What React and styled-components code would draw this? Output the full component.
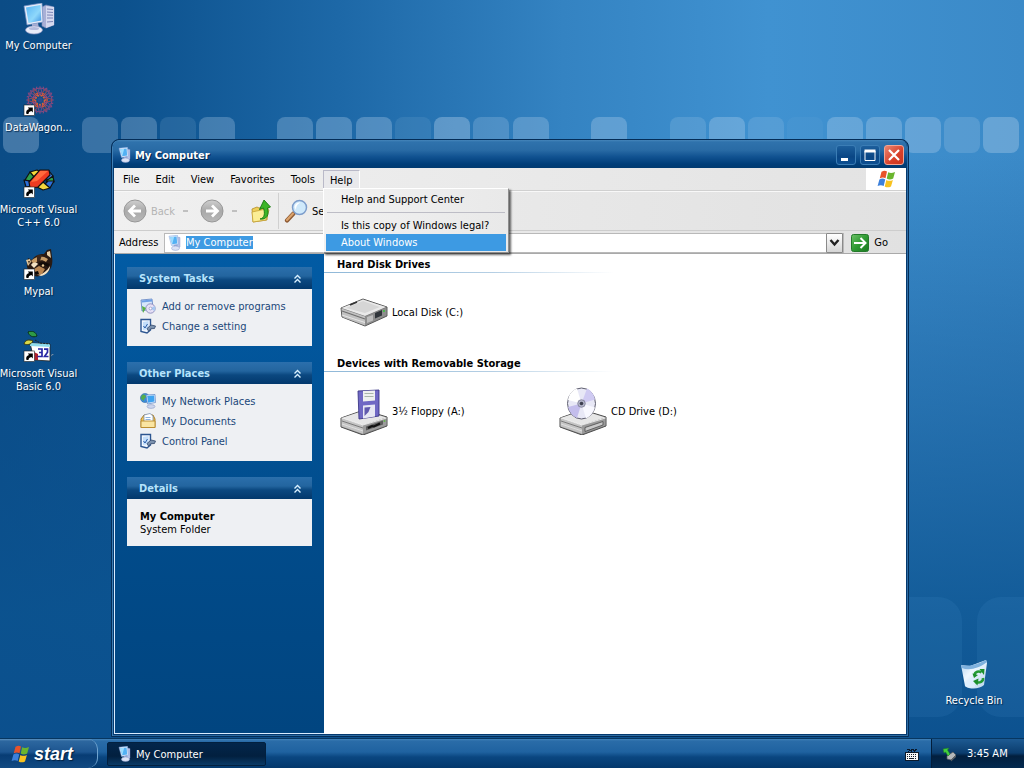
import React, { useEffect, useRef } from "react";
import styled, { createGlobalStyle, css } from "styled-components";

const GlobalStyle = createGlobalStyle`
  * { box-sizing: border-box; }
  html, body { margin: 0; padding: 0; }
  body, button, input {
    font-family: "DejaVu Sans Condensed", "DejaVu Sans", "Liberation Sans", sans-serif;
    font-size: 11px;
    line-height: 13px;
  }
  button { border: 0; padding: 0; background: none; color: inherit; text-align: left; }
  ul { list-style: none; margin: 0; padding: 0; }
`;

/* ---------- wallpaper ---------- */

const Screen = styled.div`
  position: relative;
  display: flex;
  flex-direction: column;
  height: 100vh;
  min-height: 600px;
  overflow: hidden;
  background: #0b4f8c;
`;

const WallpaperSvg = styled.svg`
  position: absolute;
  inset: 0;
  width: 100%;
  height: 100%;
`;

const TILES = [
  [3, 0.24], [82, 0.2], [121, 0.22], [160, 0.1], [199, 0.22], [277, 0.22], [316, 0.24],
  [356, 0.24], [395, 0.08], [434, 0.28], [473, 0.18], [513, 0.22], [591, 0.24], [670, 0.14],
  [709, 0.24], [748, 0.13], [787, 0.04], [827, 0.24], [866, 0.24], [905, 0.24], [944, 0.16], [983, 0.26],
];

function Wallpaper() {
  return (
    <WallpaperSvg viewBox="0 0 1024 768" preserveAspectRatio="none" aria-hidden="true">
      <defs>
        <linearGradient id="wpAcross" x1="0" x2="1" y1="0" y2="0">
          <stop offset="0" stopColor="#0b4c86" />
          <stop offset=".12" stopColor="#0c518d" />
          <stop offset=".33" stopColor="#1d68a7" />
          <stop offset=".55" stopColor="#3483c2" />
          <stop offset=".75" stopColor="#4092d1" />
          <stop offset="1" stopColor="#3b8ac8" />
        </linearGradient>
        <linearGradient id="wpDown" x1="0" x2="0" y1="0" y2="1">
          <stop offset=".2" stopColor="#0b4f8d" stopOpacity="0" />
          <stop offset=".45" stopColor="#0b4f8d" stopOpacity=".35" />
          <stop offset=".8" stopColor="#0b5390" stopOpacity=".85" />
          <stop offset="1" stopColor="#0b4f8d" stopOpacity="1" />
        </linearGradient>
      </defs>
      <rect width="1024" height="768" fill="url(#wpAcross)" />
      <rect width="1024" height="768" fill="url(#wpDown)" />
      {TILES.map(([x, a]) => (
        <rect key={x} x={x} y="117" width="36" height="36" rx="8" fill="#bcd6ee" fillOpacity={a * 1.3} />
      ))}
      <rect x="840" y="597" width="122" height="120" rx="24" fill="#4f9bd6" fillOpacity=".12" />
      <rect x="977" y="597" width="122" height="120" rx="24" fill="#4f9bd6" fillOpacity=".12" />
    </WallpaperSvg>
  );
}

/* ---------- drawings ---------- */

const Art = styled.svg`
  display: block;
  flex: none;
  width: ${(p) => p.$w}px;
  height: ${(p) => p.$h || p.$w}px;
`;

function ComputerArt() {
  return (
    <Art $w={32} viewBox="0 0 32 32">
      <defs>
        <linearGradient id="pcScr" x1="0" y1="0" x2="1" y2="1">
          <stop offset="0" stopColor="#58b4f4" /><stop offset=".6" stopColor="#8fd8fb" /><stop offset="1" stopColor="#3d93e2" />
        </linearGradient>
      </defs>
      <path d="M19 4l4-2 8 2v18l-8 3-4-2z" fill="#a9b0d6" stroke="#7f89b8" strokeWidth=".6" />
      <path d="M23 3l8 1v18l-8 3z" fill="#d5d9ef" />
      <path d="M24 6l6 .5M24 9l6 .5M24 12l6 .2M24 15l6 0M24 19l6-.5" stroke="#7d86b8" strokeWidth="1" />
      <path d="M1 3l18-3 1 19-16 3z" fill="#e7ecf9" stroke="#6f8cc2" strokeWidth=".7" />
      <path d="M3 4.500l14.500-2.500.8 15.500L5.500 20z" fill="url(#pcScr)" />
      <path d="M9 21l6-1 1 5-7 1z" fill="#a6aed4" />
      <ellipse cx="11" cy="27" rx="8.500" ry="4" fill="#e9ecf8" stroke="#8f98c4" strokeWidth=".7" />
      <ellipse cx="11" cy="25.500" rx="5" ry="1.500" fill="#b4bbdc" />
    </Art>
  );
}

function SmallComputerArt() {
  return (
    <Art $w={16} viewBox="0 0 16 16">
      <path d="M10 2l3 .5v9.500l-3 2z" fill="#b7c2e6" stroke="#7d8cc0" strokeWidth=".4" />
      <path d="M2 1.200l8.500-.9.700 9.200-6.700 1z" fill="#dfeafc" stroke="#7aa3dc" strokeWidth=".5" />
      <path d="M3.200 2.200l6.400-.7.500 7-4.800.8z" fill="#53b1f3" />
      <path d="M3.200 2.200l4-.4-1.200 4.500-.8 2.700z" fill="#9bdcff" />
      <path d="M6.500 10l3.500-.4.5 2.400-3 .4z" fill="#94a5d6" />
      <ellipse cx="8.500" cy="13.200" rx="4" ry="2.200" fill="#dce2f5" stroke="#8b9ccc" strokeWidth=".5" />
    </Art>
  );
}

function ShortcutArrow() {
  return (
    <g>
      <rect x="1" y="20" width="10.500" height="10.500" fill="#fff" stroke="#222" strokeWidth=".6" />
      <path d="M3.500 29c-1-2.500.3-4.300 2.500-5L4.800 22.500h5v5L8.400 26c-2 .5-2.900 1.300-2.900 3z" fill="#000" />
    </g>
  );
}

function WagonArt() {
  const petals = [0, 30, 60, 90, 120, 150, 180, 210, 240, 270, 300, 330];
  return (
    <Art $w={32} viewBox="0 0 32 32">
      {petals.map((a, i) => (
        <g key={a} transform={`rotate(${a} 17 15)`} fill="none" strokeWidth="1">
          <path d="M17 10c-2-2-2-5 0-7 2 2 2 5 0 7z" stroke={i % 2 ? "#b3474f" : "#8a4b86"} />
          <path d="M13 2l2 2 2-2.500 2 2.500 2-2" stroke="#80497f" />
          <circle cx="17" cy="8.500" r="1" stroke={i % 2 ? "#d2563e" : "#9c4a72"} />
        </g>
      ))}
      <circle cx="17" cy="15" r="4.500" fill="none" stroke="#d9603a" strokeWidth="1.500" strokeDasharray="2 1" />
      <circle cx="17" cy="15" r="2.500" fill="#294d8c" />
      <ShortcutArrow />
    </Art>
  );
}

function VisualCArt() {
  return (
    <Art $w={32} viewBox="0 0 32 32">
      <g stroke="#111" strokeWidth="1.200" strokeLinejoin="round">
        <path d="M7 5l5 3-4 6-6-1z" fill="#2fa04a" />
        <path d="M7 5l7-2 4 2-6 6z" fill="#f6dc3a" />
        <path d="M1 13l5 1 2 5-5 1z" fill="#2c6fd8" />
        <path d="M26 4l4 5-3 5-5-3z" fill="#3b7be0" />
        <path d="M30 9l1 6-4 2-4-3z" fill="#2fa04a" />
        <path d="M31 14l-4 7-6-3 4-4z" fill="#2c6fd8" />
        <path d="M27 21l-7 2-6-3 6-5z" fill="#f4d63c" />
        <path d="M17 3l9 0 1 5-12 12-8 1-1-6z" fill="#ee3c22" />
      </g>
      <path d="M17 4l8 0-11 10-6 1z" fill="#ff6a3c" />
      <ShortcutArrow />
    </Art>
  );
}

function RaccoonArt() {
  return (
    <Art $w={32} viewBox="0 0 32 32">
      <path d="M4 13l1-4 4 2c3-5 7-6 12-6l3-4 4-1 1 8c1 6 0 11-4 15-5 4-12 6-15 3-4-3-7-7-6-13z" fill="#2a1a12" />
      <path d="M24 3l3-1 1 7-4-3z" fill="#e9cfa6" />
      <path d="M3 11l4-1 1 3-3 4z" fill="#e2c79a" />
      <path d="M5 12l2 0-1 3z" fill="#4a3222" />
      <path d="M8 12c5-5 11-6 17-2l-2 3c-4-3-8-2-12 2z" fill="#c89c66" />
      <path d="M14 6l5 0-2 6-3 1z" fill="#3c271b" />
      <path d="M8 16c2-3 5-3 7-1l-4 4z" fill="#f4e2c4" />
      <path d="M16 14c4-2 8 0 11 1l-2 3c-3-2-6-2-9-2z" fill="#120b08" />
      <path d="M27 17c0 5-4 9-9 10l-3-1c5-1 9-4 12-9z" fill="#f1e2c6" />
      <path d="M11 20l5-3 6 3-3 5-6 1z" fill="#b98652" />
      <circle cx="20" cy="16.500" r="1.200" fill="#eacb94" />
      <path d="M11 23l4-1 1 3-3 1z" fill="#0b0706" />
      <ShortcutArrow />
    </Art>
  );
}

function VisualBasicArt() {
  return (
    <Art $w={32} viewBox="0 0 32 32">
      <path d="M22 30l9-7-2 0-3 5z" fill="#7b8da3" />
      <path d="M7 12l20 1 0 17-16-1z" fill="#fff" stroke="#222" strokeWidth=".8" />
      <path d="M7 12l20 1 0 3-20-1z" fill="#8fdcec" />
      <path d="M12 9l5 3 10 1" fill="none" stroke="#222" strokeWidth="1" strokeDasharray="2 1" />
      <path d="M5 1c4-2 8 0 9 4-4 2-8 0-9-4z" fill="#2e9a46" stroke="#0a3318" />
      <path d="M1 13c1-4 5-5 9-3-2 4-6 4-9 3z" fill="#d9d94a" stroke="#3b3c10" />
      <path d="M11 21l4 2 0 6-4 0z" fill="#b01f2c" />
      <g fill="none" stroke="#2727a4" strokeWidth="1.700">
        <path d="M15 18h4v3.500h-3 3v4h-4.500" />
        <path d="M21 18.200h3.500v3l-3 4.300h4" />
      </g>
      <ShortcutArrow />
    </Art>
  );
}

function RecycleArt() {
  return (
    <Art $w={32} viewBox="0 0 32 32">
      <defs>
        <linearGradient id="binBody" x1="0" x2="1" y1="0" y2="1">
          <stop offset="0" stopColor="#a9cdec" /><stop offset=".4" stopColor="#eef7ff" /><stop offset="1" stopColor="#b6d3ec" />
        </linearGradient>
      </defs>
      <path d="M3 7l9 1L28 2l1 3-3 22c-4 4-14 5-19 1z" fill="url(#binBody)" />
      <path d="M3 7c6 2 15 0 25-5l1 2c-7 6-18 9-25 6z" fill="#7fb1de" />
      <path d="M7 28c0-6 6-9 9-8l1 9c-4 1-8 1-10-1z" fill="#dfefff" opacity=".8" />
      <g fill="none" stroke="#249a33" strokeWidth="2.600">
        <path d="M16.500 17c.5-3.500 4.500-4.500 7-2.500" />
        <path d="M25 20c.5 3.500-3.500 5.500-7 4" />
      </g>
      <path d="M21.500 11h5l-.5 6zM20.500 20.500l-5.500 2.500 4.500 4.500zM14.500 15.500l5.500 1.500-4 3z" fill="#1c8f2c" />
    </Art>
  );
}

function FlagArt({ size }) {
  return (
    <Art $w={size} viewBox="0 0 20 20">
      <path d="M5.500 2.800C8 1.200 9.500 1.700 11 2.600L9.500 9.300C7.500 8 6 8.300 3.800 9.200z" fill="#e8532a" />
      <path d="M12.200 3.200c2 1.200 4 1 6.800-.2l-1.800 6.500c-2.500 1.300-4.500 1.300-6.500 0z" fill="#6ab52e" />
      <path d="M3.400 10.400c2-1.100 4-1.200 5.800 0L7.700 17C5.700 15.900 4 15.900 1.600 17z" fill="#3d80da" />
      <path d="M10.400 10.900c2 1.200 4 1.100 6.500 0L15 17.400c-2.300 1.200-4.300 1.200-6.300 0z" fill="#f8c21f" />
    </Art>
  );
}

function NavArrowArt({ flip }) {
  return (
    <Art $w={24} viewBox="0 0 24 24">
      <defs>
        <linearGradient id="navBall" x1="0" x2="0" y1="0" y2="1">
          <stop offset="0" stopColor="#cfcfcf" /><stop offset=".5" stopColor="#a9a9a9" /><stop offset="1" stopColor="#b9b9b9" />
        </linearGradient>
      </defs>
      <circle cx="12" cy="12" r="11" fill="url(#navBall)" stroke="#989898" />
      <path
        transform={flip ? "rotate(180 12 12)" : undefined}
        d="M18 12H7M12 6.500L6.500 12l5.500 5.500"
        fill="none"
        stroke="#fff"
        strokeWidth="2.800"
      />
    </Art>
  );
}

function FolderUpArt() {
  return (
    <Art $w={24} viewBox="0 0 24 24">
      <path d="M3 10l5-2 2 1 7-2 2 1-1 13-14 2z" fill="#efcf5a" stroke="#b38d25" strokeWidth=".8" />
      <path d="M3 13l14-3 3 1-3 10-13 2z" fill="#fbee95" stroke="#c5a236" strokeWidth=".8" />
      <path d="M11 20c5-1 5-6 3.500-11l-4 1.500L15 1l6.500 7-3 1c2 7-1 12-7.500 11z" fill="#3cb527" stroke="#16780f" strokeWidth=".9" />
    </Art>
  );
}

function SearchArt() {
  return (
    <Art $w={24} viewBox="0 0 24 24">
      <path d="M9.500 14.500L3 21.500" stroke="#8d5a34" strokeWidth="4.200" strokeLinecap="round" />
      <path d="M9 14.500L3 21" stroke="#dba36c" strokeWidth="2.200" strokeLinecap="round" />
      <circle cx="15.500" cy="8.500" r="7" fill="#cfe9fb" stroke="#7d9dcb" strokeWidth="1.500" />
      <path d="M10.500 8a5 5 0 0 1 6-4.500C13 5 12 8 12 11z" fill="#fff" />
    </Art>
  );
}

function GoArt() {
  return (
    <Art $w={18} viewBox="0 0 18 18">
      <defs>
        <linearGradient id="goFill" x1="0" x2="1" y1="0" y2="1">
          <stop offset="0" stopColor="#6cc267" /><stop offset=".5" stopColor="#2f9a33" /><stop offset="1" stopColor="#1b7a22" />
        </linearGradient>
      </defs>
      <rect x=".5" y=".5" width="17" height="17" rx="2" fill="url(#goFill)" stroke="#237a2a" />
      <path d="M3 9h11M9.500 4l5 5-5 5" fill="none" stroke="#fff" strokeWidth="2" />
    </Art>
  );
}

function ProgramsArt() {
  return (
    <Art $w={16} viewBox="0 0 16 16">
      <path d="M1 2l11-1 1 9-11 3z" fill="#d6e6fa" stroke="#5d7fc0" strokeWidth=".8" />
      <path d="M1.500 2.400l10.500-.9.200 2-10.500 1z" fill="#6d9fe6" />
      <circle cx="10.500" cy="10.500" r="4.700" fill="#e6e0f6" stroke="#7f7fb4" strokeWidth=".8" />
      <path d="M10.500 10.500l4-2.500a4.700 4.700 0 0 1 0 5z" fill="#a7c9f2" />
      <circle cx="10.500" cy="10.500" r="1.400" fill="#fff" stroke="#7f7fb4" strokeWidth=".6" />
      <path d="M2 8l4 2-3 5z" fill="#57b045" />
    </Art>
  );
}

function SettingArt() {
  return (
    <Art $w={16} viewBox="0 0 16 16">
      <path d="M1 1.500h9.500v10.500L7 15l-6-1.500z" fill="#f1f7ff" stroke="#2c5590" strokeWidth="1.400" />
      <path d="M3 4l5.500-1v8L3 12z" fill="#c3defa" />
      <path d="M7 10.500l4-3.500 4.500 1-1 2.500-3.500.2-2.500 2.300z" fill="#7c92ae" stroke="#31486b" strokeWidth=".8" />
      <path d="M3.500 8l1.500 2L7.500 6" fill="none" stroke="#2a5ca8" />
    </Art>
  );
}

function NetworkArt() {
  return (
    <Art $w={16} viewBox="0 0 16 16">
      <circle cx="5" cy="5" r="4.600" fill="#3b8bd8" stroke="#26619c" strokeWidth=".5" />
      <path d="M2 2c2-1.500 4 0 4 1.500S4 5 4 7 1.500 6 .8 5z" fill="#53ad4c" />
      <path d="M6 2l9-.5.500 8-8 1.500z" fill="#dcecff" stroke="#5b84c4" strokeWidth=".7" />
      <path d="M7.200 3l6.900-.4.4 6-6.300 1.200z" fill="#3fa4f0" />
      <ellipse cx="11" cy="13.500" rx="4" ry="1.900" fill="#cdd6ee" stroke="#7a8cbb" strokeWidth=".5" />
    </Art>
  );
}

function DocumentsArt() {
  return (
    <Art $w={16} viewBox="0 0 16 16">
      <path d="M1 6l3-4h9l2 4v8.500H1z" fill="#eec35b" stroke="#a8781e" strokeWidth=".9" />
      <path d="M4 2l6-1.500L13 3v7H4z" fill="#fff" stroke="#6b84a8" strokeWidth=".7" />
      <path d="M5.500 4.500h5M5.500 6.500h5" stroke="#6f9fd8" strokeWidth=".8" />
      <path d="M1 8h14v6.500H1z" fill="#fae5a2" stroke="#b98a2b" strokeWidth=".9" />
    </Art>
  );
}

function DriveBase() {
  return (
    <g strokeLinejoin="round">
      <path d="M1 31L24 23l23 7v9L23 48 1 40z" fill="#7c7c7c" stroke="#4e4e4e" strokeWidth="1" />
      <path d="M1.500 31L24 23.500l22.500 7L23 38z" fill="#e6e6e6" />
      <path d="M1.500 31.500L23 38v9L1.500 39.500z" fill="#c4c4c4" />
      <path d="M2 34l21 7" stroke="#7b7b7b" />
      <path d="M2 37l21 7" stroke="#dedede" />
      <path d="M23 38l23.500-7.500v8L23 47z" fill="#9b9b9b" />
      <path d="M1.500 31L23 38l23.500-7" fill="none" stroke="#fafafa" strokeWidth=".8" />
    </g>
  );
}

function HardDiskArt() {
  return (
    <Art $w={48} viewBox="0 0 48 48">
      <g strokeLinejoin="round">
        <path d="M1 20L23 11l24 8v9L25 38 2 29z" fill="#777" stroke="#4e4e4e" strokeWidth=".9" />
        <path d="M1.500 20L23 11.500l23 7.500-21 9z" fill="#e9e9e9" />
        <path d="M6 20l17-7 17 6-15 6z" fill="#d6d6d6" />
        <path d="M1.500 20.500L25 28.500v9L2.500 29z" fill="#c2c2c2" />
        <path d="M2 23l23 8" stroke="#6e6e6e" strokeWidth="1.200" />
        <path d="M2 27l23 7.500" stroke="#e6e6e6" />
        <path d="M25 28.500L46.500 19.500v8L25 37.500z" fill="#8e8e8e" />
        <path d="M35 25l7-3v5.500l-7 3z" fill="#30353a" />
        <path d="M27 29l6-2v5.500l-6 2.500z" fill="#bdbdbd" />
        <path d="M10 17l7-3" stroke="#333" strokeWidth="1.700" />
        <rect x="43" y="22" width="2" height="2" fill="#4cb84c" />
      </g>
    </Art>
  );
}

function FloppyArt() {
  return (
    <Art $w={48} viewBox="0 0 48 48">
      <DriveBase />
      <path d="M18 4l21-1 0 26-20 3z" fill="#6f68c4" stroke="#3b3787" strokeWidth=".9" />
      <path d="M23 4l12-.5v10l-12 1z" fill="#eef0ef" />
      <path d="M24.500 6.500h9M24.500 9.500h9" stroke="#a9b5a9" />
      <path d="M23 18.500l12-1v12l-12 2z" fill="#e6e7f4" />
      <path d="M24.500 20.500l6-.5-2 5-4 4z" fill="#605aae" />
      <path d="M26 39.500l17-6v4l-17 6z" fill="#5c5c5c" />
      <path d="M28 41l4-2 2 .5 6-3" stroke="#111" strokeWidth="2" fill="none" />
      <circle cx="44.500" cy="34" r="1" fill="#63b34d" />
    </Art>
  );
}

function CdArt() {
  return (
    <Art $w={48} viewBox="0 0 48 48">
      <DriveBase />
      <path d="M26 40.500l18-6v3.500l-18 6.500z" fill="#c9c9c9" stroke="#4c4c4c" strokeWidth=".8" />
      <ellipse cx="22.500" cy="16.500" rx="14" ry="15.500" fill="#e8e8f6" stroke="#5d5d6d" strokeWidth="1" />
      <path d="M22.500 16.500L9 13c1-6 4-9.500 9-11.500z" fill="#fff" />
      <path d="M22.500 16.500L9 20c2 6 5 9.500 9 11z" fill="#c3bdec" />
      <path d="M22.500 16.500l13.500-4c-1-5-4-9-8-11z" fill="#cfcaf2" />
      <path d="M22.500 16.500l13.500 4c-2 6-5 9-9 11z" fill="#f8f8ff" />
      <circle cx="22.500" cy="16.500" r="3.800" fill="#b2b3c8" stroke="#74758b" strokeWidth=".7" />
      <circle cx="22.500" cy="16.500" r="1.800" fill="#3c3e4e" />
    </Art>
  );
}

function ChevronsArt() {
  return (
    <Art $w={9} $h={10} viewBox="0 0 9 10">
      <path d="M1.500 4.500l3-3 3 3M1.500 8.500l3-3 3 3" fill="none" stroke="#d9f0ff" strokeWidth="1.400" />
    </Art>
  );
}

function KeyboardArt() {
  return (
    <Art $w={14} viewBox="0 0 14 14" shapeRendering="crispEdges">
      <path d="M2 2h2v1h2v-1h2v1h2v-1h2M3 4h1m2 0h1m2 0h1" fill="none" stroke="#07182d" />
      <rect x="0" y="5" width="14" height="9" fill="#0b1a2c" />
      <rect x="1" y="6" width="12" height="7" fill="#f6f6f6" />
      <path d="M2 7.500h10M2 9.500h10" stroke="#101c2c" strokeDasharray="1 1" />
      <path d="M2 11.500h1m1 0h5m1 0h1" stroke="#101c2c" />
    </Art>
  );
}

function EjectArt() {
  return (
    <Art $w={16} viewBox="0 0 16 16">
      <path d="M5 10l6-4 3 3-5 5-4-1z" fill="#b4b8bb" stroke="#50565c" strokeWidth=".7" />
      <path d="M9 14l5-5 0 2-5 4.500z" fill="#5c6268" />
      <path d="M1 3l6-1-1.500 2L8 8 6 10 3.500 6 2 7z" fill="#43cf3b" stroke="#1c7a24" strokeWidth=".5" />
    </Art>
  );
}

/* ---------- desktop ---------- */

const Desktop = styled.main`
  position: relative;
  flex: 1;
`;

const IconColumn = styled.div`
  position: absolute;
  top: 3px;
  left: 0;
  display: grid;
  grid-auto-rows: 82px;
  grid-template-columns: 77px;
`;

const Shortcut = styled.button`
  display: flex;
  flex-direction: column;
  align-items: center;
  gap: 4px;
  height: 62px;
  color: #fff;
  text-align: center;
  text-shadow: 1px 1px 1px #04284c;
  white-space: pre;
`;

const BinSpot = styled.div`
  position: absolute;
  right: 12px;
  bottom: 18px;
  display: grid;
  width: 76px;
`;

/* ---------- window ---------- */

const Frame = styled.section`
  position: absolute;
  top: 139px;
  right: 115px;
  bottom: 1px;
  left: 111px;
  display: flex;
  flex-direction: column;
  padding: 0 1px 2px;
  border: 1px solid #042d58;
  border-radius: 8px 8px 0 0;
  background: #04396f;
  box-shadow: inset 1px 1px 0 #3f7fb4, inset -1px -1px 0 #2f6da3;
`;

const TitleBar = styled.header`
  display: flex;
  align-items: center;
  gap: 2px;
  height: 28px;
  padding: 2px 3px 0 4px;
  border-radius: 7px 7px 0 0;
  background: linear-gradient(#4585ba 0, #2f72ac 2px, #296ba5 10px, #105190 17px, #003e79 24px, #003a70 28px);
  color: #fff;
`;

const Title = styled.h1`
  flex: 1;
  margin: 0;
  font-size: 11px;
  font-weight: bold;
  text-shadow: 1px 1px 0 #02264b;
`;

const Controls = styled.div`
  display: flex;
  gap: 4px;
`;

const ControlButton = styled.button`
  display: grid;
  place-items: center;
  width: 20px;
  height: 20px;
  border: 1px solid ${(p) => (p.$close ? "#f3a493" : "#3b7db5")};
  border-radius: 3px;
  background: ${(p) =>
    p.$close ? "linear-gradient(135deg, #ea8570, #d8402a 60%, #c9361f)" : "linear-gradient(#1d5f9c, #0a4685 60%, #0c4f92)"};
`;

const WindowBody = styled.div`
  display: flex;
  flex: 1;
  flex-direction: column;
  min-height: 0;
  margin: 0 1px;
  background: #fff;
`;

const MenuRow = styled.nav`
  position: relative;
  z-index: 2;
  display: flex;
  height: 23px;
  padding-left: 1px;
  border-bottom: 1px solid #d0d0d0;
  background: linear-gradient(90deg, #f0f0f0, #e3e3e3);
`;

const MenuEntry = styled.div`
  position: relative;
  padding: 2px 0;
`;

const MenuButton = styled.button`
  height: 19px;
  padding: 0 7px;
  border: 1px solid transparent;
  ${(p) =>
    p.$open &&
    css`
      border-color: #b9b9c8 #fff #fff #b9b9c8;
      background: #e9e9ec;
      padding: 2px 6px 0;
    `}
`;

const Throbber = styled.div`
  display: grid;
  place-items: center;
  width: 40px;
  height: 22px;
  margin-left: auto;
  background: #fff;
`;

const Popup = styled.ul`
  position: absolute;
  top: 20px;
  left: 0;
  width: 186px;
  padding: 2px 2px 1px;
  border: 1px solid;
  border-color: #fff #8e8e8e #8e8e8e #fff;
  background: linear-gradient(90deg, #f1f1f1, #e9e9e9);
  box-shadow: 2px 2px 2px rgba(0, 0, 0, 0.6);
`;

const PopupItem = styled.button`
  display: block;
  width: 100%;
  height: 17px;
  padding: 0 15px;
  white-space: nowrap;
  ${(p) =>
    p.$active &&
    css`
      background: #3d9ae3;
      color: #fff;
    `}
`;

const PopupRule = styled.li`
  height: 1px;
  margin: 4px 1px;
  background: #bdbdc6;
`;

const Toolbar = styled.div`
  display: flex;
  align-items: center;
  height: 40px;
  padding-left: 9px;
  border-top: 1px solid #f8f8f8;
  border-bottom: 1px solid #cdcdcd;
  background: linear-gradient(90deg, #f0f0f0, #e1e1e1);
`;

const ToolButton = styled.button`
  display: flex;
  align-items: center;
  gap: 4px;
  color: ${(p) => (p.disabled ? "#b4b4b4" : "#000")};
`;

const DropMark = styled.span`
  width: 5px;
  height: 2px;
  margin: 0 12px 0 8px;
  background: #c0c0c0;
`;

const ToolRule = styled.span`
  width: 1px;
  height: 36px;
  margin: 0 5px;
  background: #d0d0d0;
`;

const AddressRow = styled.form`
  display: flex;
  align-items: center;
  height: 23px;
  padding: 1px 18px 0 5px;
  border-bottom: 1px solid #a9a9a9;
  background: linear-gradient(90deg, #f0f0f0, #e1e1e1);
`;

const AddressLabel = styled.label`
  width: 45px;
`;

const AddressBox = styled.div`
  display: flex;
  flex: 1;
  align-items: center;
  gap: 3px;
  height: 20px;
  padding-left: 2px;
  border: 1px solid #b9b9b9;
  background: #fff;
`;

const AddressInput = styled.input`
  flex: 1;
  min-width: 0;
  height: 15px;
  padding: 0;
  border: 0;
  outline: 0;
  background: transparent;
  caret-color: transparent;
  &::selection {
    background: #3d9ae3;
    color: #fff;
  }
`;

const DropButton = styled.button`
  display: grid;
  place-items: center;
  width: 17px;
  height: 20px;
  border: 1px solid #8a8a8a;
  border-radius: 1px;
  background: linear-gradient(#fff, #d5d5d5);
`;

const GoButton = styled.button`
  display: flex;
  align-items: center;
  gap: 5px;
  margin-left: 7px;
`;

const Split = styled.div`
  display: flex;
  flex: 1;
  min-height: 0;
`;

const Sidebar = styled.aside`
  display: flex;
  flex-direction: column;
  flex: none;
  gap: 16px;
  width: 210px;
  padding: 13px 12px;
  border-bottom: 1px solid #d9ecff;
  border-left: 1px solid #d9ecff;
  background: linear-gradient(#025ba4, #014b8a 60%, #014580);
`;

const PanelHead = styled.button`
  display: flex;
  align-items: center;
  justify-content: space-between;
  width: 100%;
  height: 22px;
  padding: 1px 10px 0 12px;
  background: linear-gradient(#2b6fac, #23659f 9px, #0b4880 13px, #02386c 22px);
  color: #b5e3fc;
  font-weight: bold;
`;

const PanelBody = styled.ul`
  display: grid;
  gap: 4px;
  padding: 9px 13px 12px;
  background: #eef0f3;
`;

const TaskLink = styled.a`
  display: flex;
  align-items: center;
  gap: 6px;
  height: 16px;
  color: #1a4779;
  text-decoration: none;
`;

const Facts = styled.div`
  height: 47px;
  padding: 11px 13px;
  background: #eef0f3;
`;

const Listing = styled.div`
  flex: 1;
  min-width: 0;
`;

const Group = styled.section`
  height: 99px;
`;

const GroupTitle = styled.h2`
  height: 19px;
  margin: 0;
  padding: 4px 13px 0;
  border-bottom: 1px solid;
  border-image: linear-gradient(90deg, #8fb8d8, #b5cfe4 170px, #fff 290px) 1;
  font-size: 11px;
  font-weight: bold;
`;

const Drives = styled.div`
  display: grid;
  grid-template-columns: repeat(auto-fill, 219px);
  padding: 15px 16px 0;
`;

const Drive = styled.button`
  display: flex;
  align-items: center;
  gap: 4px;
  height: 48px;
`;

/* ---------- taskbar ---------- */

const Taskbar = styled.footer`
  position: relative;
  display: flex;
  align-items: stretch;
  height: 30px;
  border-top: 1px solid #073660;
  background: linear-gradient(#4384bb 0, #2a6ca8 2px, #1f62a0 13px, #0a4680 18px, #03386c 29px);
`;

const StartButton = styled.button`
  display: flex;
  align-items: center;
  gap: 4px;
  width: 98px;
  padding-left: 10px;
  border-right: 1px solid #6fa3cf;
  border-radius: 0 10px 10px 0;
  background: linear-gradient(#5f93c0 0, #2d679f 2px, #1c5590 13px, #073c74 16px, #124a82 29px);
  color: #fff;
  font-family: "Liberation Sans", sans-serif;
  font-size: 18px;
  font-style: italic;
  font-weight: bold;
  line-height: 20px;
  text-shadow: 1px 1px 1px #03203f;
`;

const TaskButton = styled.button`
  display: flex;
  align-items: center;
  gap: 3px;
  width: 159px;
  height: 24px;
  margin: 3px 0 0 9px;
  padding-left: 9px;
  border: 1px solid #02203f;
  border-radius: 2px;
  background: linear-gradient(#03264b, #02203f 60%, #0a3a66);
  color: #fff;
`;

const TrayKeyboard = styled.div`
  display: flex;
  align-items: center;
  margin-left: auto;
  padding-right: 12px;
`;

const Tray = styled.div`
  display: flex;
  align-items: center;
  gap: 9px;
  width: 93px;
  padding-left: 10px;
  border-left: 1px solid #021d3a;
  background: linear-gradient(#1d5a92, #0b3d6e 14px, #021f3e 17px, #032a50 29px);
  color: #fff;
  white-space: nowrap;
`;

const SHORTCUTS = [
  ["My Computer", ComputerArt],
  ["DataWagon...", WagonArt],
  ["Microsoft Visual\nC++ 6.0", VisualCArt],
  ["Mypal", RaccoonArt],
  ["Microsoft Visual\nBasic 6.0", VisualBasicArt],
];

function Panel({ title, children }) {
  return (
    <section>
      <PanelHead type="button" aria-expanded="true">
        {title}
        <ChevronsArt />
      </PanelHead>
      {children}
    </section>
  );
}

function Task({ icon, children }) {
  return (
    <li>
      <TaskLink href="#">
        {icon}
        {children}
      </TaskLink>
    </li>
  );
}

function HelpMenu() {
  return (
    <Popup>
      <li><PopupItem type="button">Help and Support Center</PopupItem></li>
      <PopupRule role="separator" />
      <li><PopupItem type="button">Is this copy of Windows legal?</PopupItem></li>
      <li><PopupItem type="button" $active>About Windows</PopupItem></li>
    </Popup>
  );
}

function ExplorerWindow() {
  const address = useRef(null);
  useEffect(() => {
    address.current.focus({ preventScroll: true });
    address.current.select();
  }, []);

  return (
    <Frame>
      <TitleBar>
        <SmallComputerArt />
        <Title>My Computer</Title>
        <Controls>
          <ControlButton type="button" aria-label="Minimize">
            <Art $w={14} viewBox="0 0 14 14"><path d="M2 10h7v3H2z" fill="#fff" /></Art>
          </ControlButton>
          <ControlButton type="button" aria-label="Maximize">
            <Art $w={14} viewBox="0 0 14 14">
              <path d="M2 3v9.500h10V3" fill="none" stroke="#fff" />
              <path d="M1.500 1.500h11v3h-11z" fill="#fff" />
            </Art>
          </ControlButton>
          <ControlButton type="button" aria-label="Close" $close>
            <Art $w={14} viewBox="0 0 14 14">
              <path d="M2 2l10 10M12 2L2 12" stroke="#fff" strokeWidth="2.200" />
            </Art>
          </ControlButton>
        </Controls>
      </TitleBar>
      <WindowBody>
        <MenuRow>
          {["File", "Edit", "View", "Favorites", "Tools"].map((name) => (
            <MenuEntry key={name}><MenuButton type="button">{name}</MenuButton></MenuEntry>
          ))}
          <MenuEntry>
            <MenuButton type="button" aria-expanded="true" $open>Help</MenuButton>
            <HelpMenu />
          </MenuEntry>
          <Throbber><FlagArt size={20} /></Throbber>
        </MenuRow>
        <Toolbar>
          <ToolButton type="button" disabled><NavArrowArt />Back</ToolButton>
          <DropMark />
          <ToolButton type="button" disabled aria-label="Forward"><NavArrowArt flip /></ToolButton>
          <DropMark />
          <ToolButton type="button" aria-label="Up"><FolderUpArt /></ToolButton>
          <ToolRule />
          <ToolButton type="button"><SearchArt />Search</ToolButton>
        </Toolbar>
        <AddressRow onSubmit={(e) => e.preventDefault()}>
          <AddressLabel htmlFor="address">Address</AddressLabel>
          <AddressBox>
            <SmallComputerArt />
            <AddressInput id="address" ref={address} defaultValue="My Computer" />
            <DropButton type="button" aria-label="Show addresses">
              <Art $w={11} viewBox="0 0 11 11"><path d="M1.500 3l4 4.500 4-4.500" fill="none" stroke="#222" strokeWidth="2.400" /></Art>
            </DropButton>
          </AddressBox>
          <GoButton type="submit"><GoArt />Go</GoButton>
        </AddressRow>
        <Split>
          <Sidebar>
            <Panel title="System Tasks">
              <PanelBody>
                <Task icon={<ProgramsArt />}>Add or remove programs</Task>
                <Task icon={<SettingArt />}>Change a setting</Task>
              </PanelBody>
            </Panel>
            <Panel title="Other Places">
              <PanelBody>
                <Task icon={<NetworkArt />}>My Network Places</Task>
                <Task icon={<DocumentsArt />}>My Documents</Task>
                <Task icon={<SettingArt />}>Control Panel</Task>
              </PanelBody>
            </Panel>
            <Panel title="Details">
              <Facts><strong>My Computer</strong><br />System Folder</Facts>
            </Panel>
          </Sidebar>
          <Listing>
            <Group>
              <GroupTitle>Hard Disk Drives</GroupTitle>
              <Drives>
                <Drive type="button"><HardDiskArt />Local Disk (C:)</Drive>
              </Drives>
            </Group>
            <Group>
              <GroupTitle>Devices with Removable Storage</GroupTitle>
              <Drives>
                <Drive type="button"><FloppyArt />3½ Floppy (A:)</Drive>
                <Drive type="button"><CdArt />CD Drive (D:)</Drive>
              </Drives>
            </Group>
          </Listing>
        </Split>
      </WindowBody>
    </Frame>
  );
}

export default function App() {
  return (
    <Screen>
      <GlobalStyle />
      <Wallpaper />
      <Desktop>
        <IconColumn>
          {SHORTCUTS.map(([label, Icon]) => (
            <Shortcut key={label} type="button"><Icon />{label}</Shortcut>
          ))}
        </IconColumn>
        <BinSpot>
          <Shortcut type="button"><RecycleArt />Recycle Bin</Shortcut>
        </BinSpot>
        <ExplorerWindow />
      </Desktop>
      <Taskbar>
        <StartButton type="button"><FlagArt size={20} />start</StartButton>
        <TaskButton type="button"><SmallComputerArt />My Computer</TaskButton>
        <TrayKeyboard><KeyboardArt /></TrayKeyboard>
        <Tray><EjectArt /><time>3:45 AM</time></Tray>
      </Taskbar>
    </Screen>
  );
}
